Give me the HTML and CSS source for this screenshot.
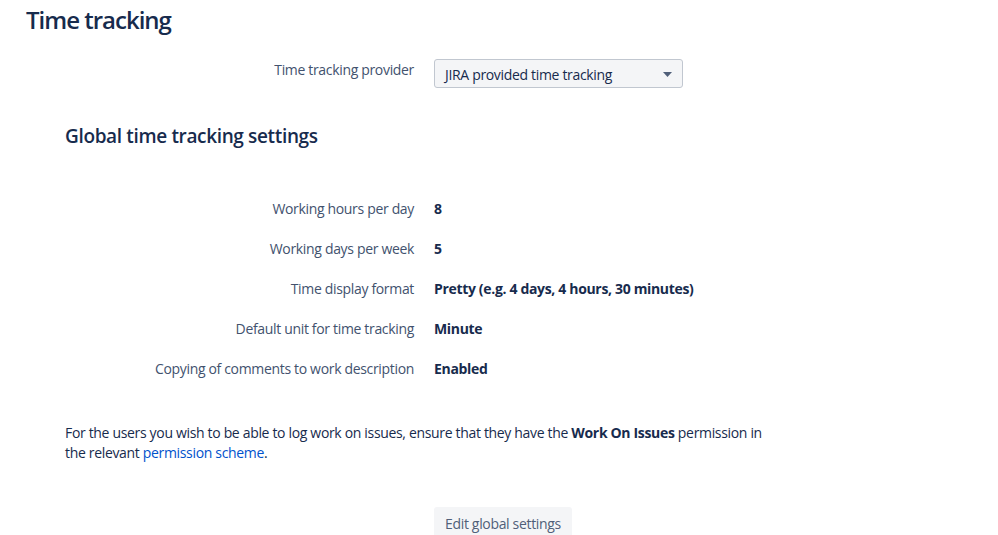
FILE: index.html
```html
<!DOCTYPE html>
<html>
<head>
<meta charset="utf-8">
<link rel="stylesheet" href="styles.css">
</head>
<body>
<div class="page">
  <h1 class="title">Time tracking</h1>
  <div class="provider">
    <div class="label provider-label">Time tracking provider</div>
    <div class="select">
      <span>JIRA provided time tracking</span>
      <svg class="caret" width="9" height="5" viewBox="0 0 9 5"><path d="M0 0H9L4.5 5Z" fill="#505F79"/></svg>
    </div>
  </div>
  <section class="settings">
    <h2 class="subtitle">Global time tracking settings</h2>
    <div class="rows">
      <div class="label">Working hours per day</div><div class="value">8</div>
      <div class="label">Working days per week</div><div class="value">5</div>
      <div class="label">Time display format</div><div class="value">Pretty (e.g. 4 days, 4 hours, 30 minutes)</div>
      <div class="label">Default unit for time tracking</div><div class="value">Minute</div>
      <div class="label">Copying of comments to work description</div><div class="value">Enabled</div>
    </div>
    <p class="note"><span class="line">For the users you wish to be able to log work on issues, ensure that they have the <b>Work On Issues</b> permission in</span><span class="line">the relevant <a href="#">permission scheme</a>.</span></p>
    <div class="actions"><button class="btn">Edit global settings</button></div>
  </section>
</div>
</body>
</html>
```
FILE: styles.css
```css
html, body {
  margin: 0;
  background: #fff;
}
body {
  font-family: "Open Sans", "Noto Sans", sans-serif;
  font-size: 14px;
  letter-spacing: -0.33px;
  color: #172B4D;
  overflow: hidden;
}
.page {
  padding: 0 0 0 26px;
}
.title {
  margin: 0;
  padding-top: 5px;
  font-size: 24px;
  font-weight: 600;
  letter-spacing: -1px;
  line-height: 30px;
  color: #172B4D;
}
.provider {
  display: grid;
  grid-template-columns: 388px 249px;
  column-gap: 20px;
  margin-top: 25px;
  align-items: start;
}
.label {
  text-align: right;
  color: #42526E;
  line-height: 20px;
}
.select {
  box-sizing: border-box;
  height: 29px;
  background: #F4F5F7;
  border: 1px solid #C1C7D0;
  border-radius: 3px;
  display: flex;
  align-items: center;
  justify-content: space-between;
  padding: 1px 10px 0 10px;
  margin-top: -1px;
  margin-bottom: -9px;
  color: #172B4D;
}
.settings {
  padding-left: 39px;
}
.subtitle {
  margin: 42px 0 0;
  font-size: 19px;
  font-weight: 600;
  letter-spacing: -0.35px;
  line-height: 28px;
}
.rows {
  display: grid;
  grid-template-columns: 349px 1fr;
  column-gap: 20px;
  row-gap: 20px;
  margin-top: 49px;
}
.value {
  font-weight: 700;
  line-height: 20px;
}
.note {
  margin: 44px 0 0;
  line-height: 20px;
  color: #172B4D;
}
.note .line {
  display: block;
}
.note a {
  color: #0052CC;
  text-decoration: none;
}
.actions {
  margin-top: 44px;
  padding-left: 369px;
}
.btn {
  font: inherit;
  letter-spacing: -0.33px;
  height: 32px;
  padding: 0 11px;
  border: 0;
  border-radius: 3px;
  background: #F4F5F7;
  color: #505F79;
}
```
